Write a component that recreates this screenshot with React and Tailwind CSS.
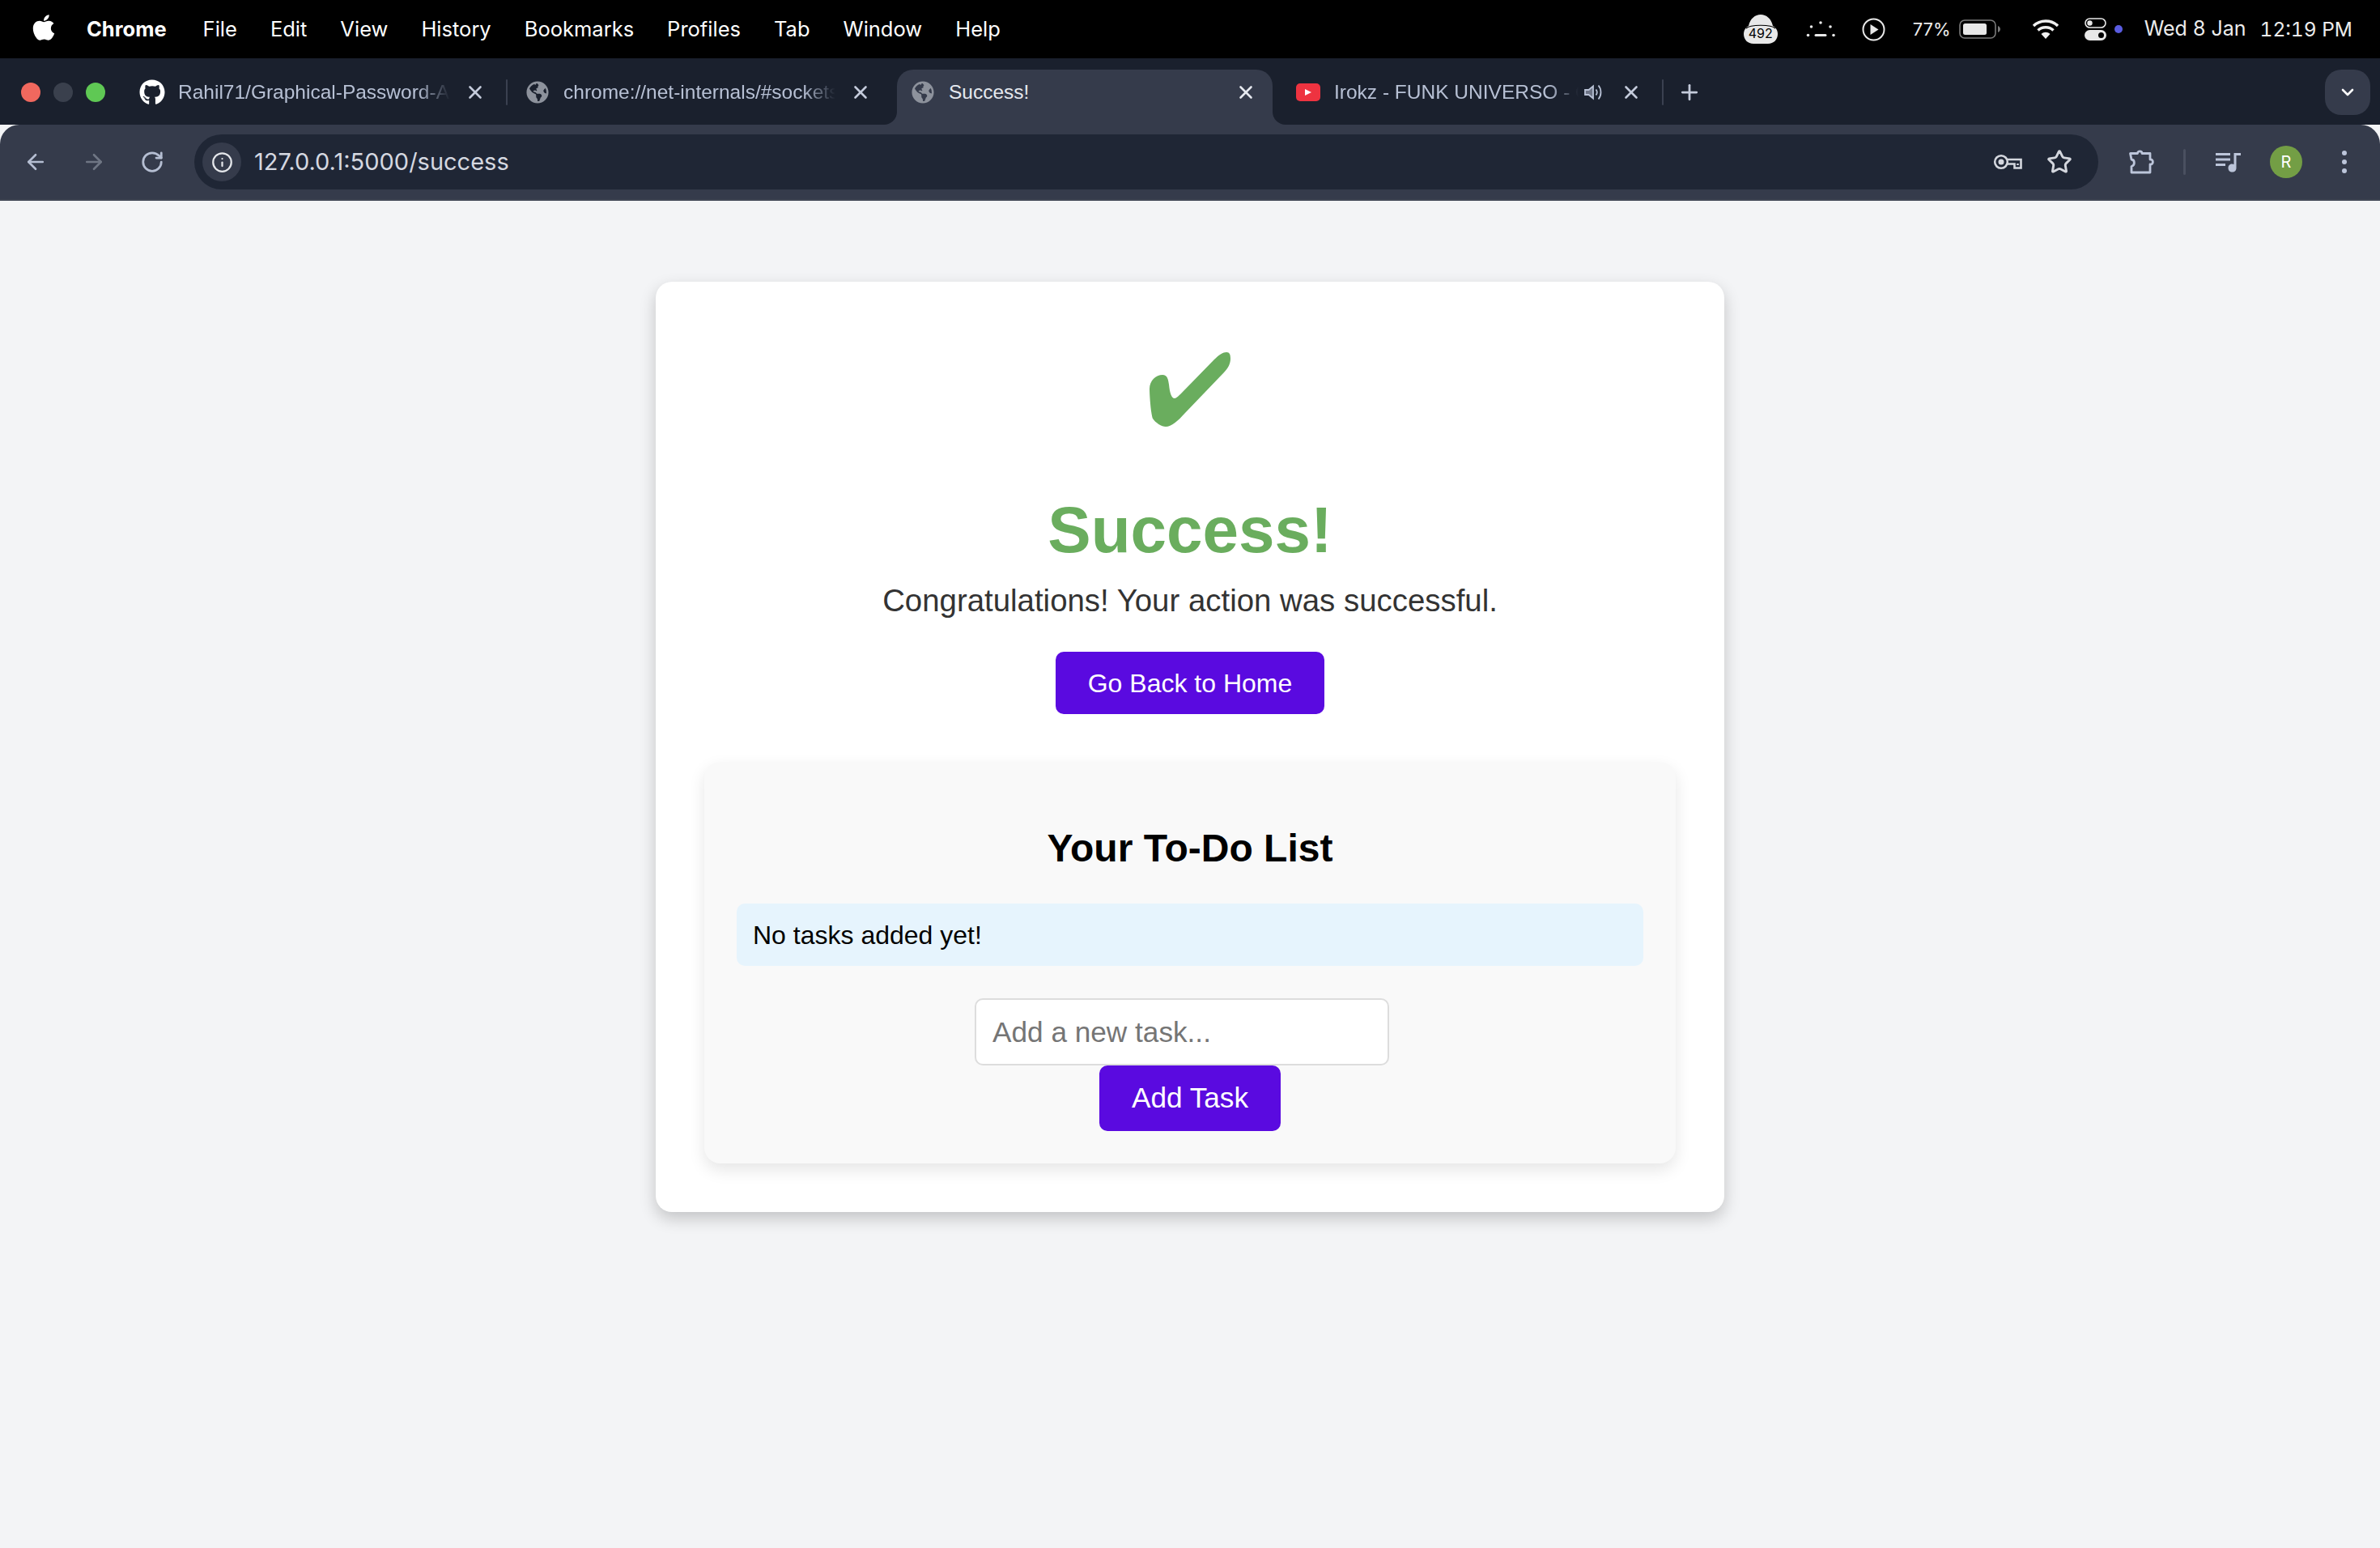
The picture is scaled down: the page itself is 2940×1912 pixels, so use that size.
import React from "react";
import { FaApple, FaGithub, FaGlobeAmericas } from "react-icons/fa";
import { ArrowLeft, ArrowRight, ChevronDown, Info, Plus, RotateCw, Star, X } from "lucide-react";

const menuItems = ["File", "Edit", "View", "History", "Bookmarks", "Profiles", "Tab", "Window", "Help"];

const CheckMark = () => (
  <svg viewBox="0 0 100 92" className="w-[100px] h-[92px]">
    <path
      fill="#6aad5e"
      d="M95 0C99 0 100 3 100 8C100 14 97 20 92 25L44 75C35 85 27 92 20 92C15 92 7 87 4 82C2 78 0 55 0 45C0 35 8 28 16 28C22 28 23 33 24 40C25 50 27 57 31 57C33 57 36 54 40 50L80 9C86 3 91 0 95 0Z"
    />
  </svg>
);

const CloudBadge = () => (
  <span className="relative block w-[42px] h-[36px]">
    <svg viewBox="0 0 42 36" className="w-[42px] h-[36px]">
      <path
        fill="#e8e8e8"
        d="M6 14C8 5 14 0 21 0C28 0 34 5 36 14C40 16 42 20 42 24C42 31 37 36 30 36H12C5 36 0 31 0 24C0 20 2 16 6 14Z"
      />
      <path fill="none" stroke="#000" strokeWidth="1.2" d="M3 17C8 12 34 12 39 17" />
    </svg>
    <span className="absolute inset-x-0 top-[12px] text-center text-[16px] leading-[22px] text-black font-['Inter',sans-serif]">
      492
    </span>
  </span>
);

const StatusDots = () => (
  <svg viewBox="0 0 37 22" className="w-[37px] h-[22px]" fill="#e8e8e8">
    <circle cx="18" cy="3" r="1.8" />
    <circle cx="6.5" cy="8" r="1.8" />
    <circle cx="30" cy="8" r="1.8" />
    <circle cx="2.5" cy="18.5" r="1.8" />
    <circle cx="34" cy="18.5" r="1.8" />
    <rect x="10.5" y="17" width="15" height="3" rx="1.5" />
  </svg>
);

const PlayCircle = () => (
  <svg viewBox="0 0 29 29" className="w-[29px] h-[29px]">
    <circle cx="14.5" cy="14.5" r="13" fill="none" stroke="#e8e8e8" strokeWidth="2" />
    <path d="M10.5 8L20.5 14.5L10.5 21Z" fill="#e8e8e8" />
  </svg>
);

const Battery = () => (
  <svg viewBox="0 0 52 24" className="w-[52px] h-[24px]">
    <rect x="1" y="1" width="44" height="22" rx="6" fill="none" stroke="#7b7b7b" strokeWidth="1.6" />
    <rect x="5" y="5" width="29" height="14" rx="2.5" fill="#e8e8e8" />
    <path d="M48 8C50 9 51 10.5 51 12C51 13.5 50 15 48 16Z" fill="#7b7b7b" />
  </svg>
);

const Wifi = () => (
  <svg viewBox="0 0 34 26" className="w-[34px] h-[26px]" fill="none" stroke="#f0f0f0" strokeLinecap="butt">
    <path strokeWidth="3.4" d="M2 9C10 1 24 1 32 9" />
    <path strokeWidth="3.4" d="M7.5 14.5C12.5 9.5 21.5 9.5 26.5 14.5" />
    <path d="M11.5 19L17 25L22.5 19C19 16 15 16 11.5 19Z" fill="#f0f0f0" stroke="none" />
  </svg>
);

const Toggles = () => (
  <svg viewBox="0 0 28 28" className="w-[28px] h-[28px]">
    <rect x="1" y="1" width="25" height="11" rx="5.5" fill="none" stroke="#e8e8e8" strokeWidth="1.6" />
    <circle cx="6.5" cy="6.5" r="3.2" fill="#e8e8e8" />
    <rect y="15" width="27" height="13" rx="6.5" fill="#e8e8e8" />
    <circle cx="20.5" cy="21.5" r="3.5" fill="#000" />
  </svg>
);

const YouTube = () => (
  <span className="flex items-center justify-center w-[30px] h-[22px] rounded-[5px] bg-[#ee3340]">
    <svg viewBox="0 0 10 10" className="w-[10px] h-[10px]">
      <path d="M1 1L9 5L1 9Z" fill="#fff" />
    </svg>
  </span>
);

const Speaker = () => (
  <svg viewBox="0 0 24 24" className="w-[24px] h-[24px]" fill="none" stroke="#b9c2d6" strokeWidth="1.8">
    <path d="M2 9H6.5L12 4.5V19.5L6.5 15H2Z" fill="#6e7587" />
    <path d="M15.5 8.5C17 10.5 17 13.5 15.5 15.5" />
    <path d="M18.5 3.5C22.5 8 22.5 16 18.5 20.5" />
  </svg>
);

const KeyIcon = () => (
  <svg viewBox="0 0 36 20" className="w-[36px] h-[20px]" fill="none" stroke="#d4d7de" strokeWidth="2.6">
    <circle cx="10" cy="10" r="7.8" />
    <circle cx="10" cy="10" r="3.5" fill="#d4d7de" stroke="none" />
    <path d="M17.5 7H34.5V17.5H26.5V12.5H17.5" />
    <path d="M30.5 12V14" />
  </svg>
);

const Extensions = () => (
  <svg viewBox="0 0 32 32" className="w-[32px] h-[32px]" fill="none" stroke="#bcc5da" strokeWidth="2.8" strokeLinejoin="round">
    <path d="M2.5 5.5H11.5C11.5 2 17 2 17 5.5H27V13C31.5 12.5 31.5 19.5 27 19V29H4V21.5C8.5 20.5 8.5 13.5 4 13Z" />
  </svg>
);

const MediaQueue = () => (
  <svg viewBox="0 0 32 26" className="w-[32px] h-[26px]" fill="#bcc5da">
    <rect x="0" y="2" width="18" height="3" />
    <rect x="0" y="8.5" width="18" height="3" />
    <rect x="0" y="15" width="12" height="3" />
    <path d="M22.5 2H31V5H25.5V20.5C25.5 23.5 23.5 25.5 20.5 25.5C17.5 25.5 15.5 23.5 15.5 20.5C15.5 17.5 17.5 15.5 20.5 15.5C21 15.5 22 15.7 22.5 16Z" />
  </svg>
);

const Tab = ({ icon, title, active, audio, fade }) => (
  <div
    className={`relative flex items-center w-[464px] h-[68px] pb-3 pl-4 pr-5 rounded-t-[20px] ${active ? "bg-[#353b4b]" : ""}`}
  >
    {active && (
      <>
        <span className="absolute -left-4 bottom-0 w-4 h-4 bg-[#353b4b]">
          <span className="block w-4 h-4 rounded-br-[16px] bg-[#1a202d]" />
        </span>
        <span className="absolute -right-4 bottom-0 w-4 h-4 bg-[#353b4b]">
          <span className="block w-4 h-4 rounded-bl-[16px] bg-[#1a202d]" />
        </span>
      </>
    )}
    <span className="flex items-center justify-center w-8 h-8 shrink-0">{icon}</span>
    <span
      className={`ml-4 mr-[18px] flex-1 overflow-hidden whitespace-nowrap text-[24.5px] leading-8 ${active ? "text-[#e6e9ef]" : "text-[#b7c0d4]"} ${fade ? "[mask-image:linear-gradient(to_right,black_88%,transparent)]" : ""}`}
    >
      {title}
    </span>
    {audio && (
      <span className="mr-[22px] -ml-[12px]">
        <Speaker />
      </span>
    )}
    <X className={`w-[26px] h-[26px] shrink-0 ${active ? "text-[#e6e9ef]" : "text-[#c4cbdb]"}`} strokeWidth={2.4} />
  </div>
);

const Divider = () => <span className="w-[2px] h-8 mx-[5px] mb-3 rounded bg-[#3a4050]" />;

const App = () => {
  return (
    <div className="min-h-screen flex flex-col bg-[#f3f4f6] font-['Liberation_Sans',Arial,sans-serif]">
      {/* mac menu bar */}
      <div className="flex items-center h-[72px] pl-[38px] pr-[34px] bg-black text-white font-['Inter',sans-serif] text-[25.5px]">
        <FaApple className="w-[32px] h-[36px] -mt-1" />
        <span className="ml-[37px] font-bold">Chrome</span>
        <div className="flex gap-[41px] ml-[45px]">
          {menuItems.map((item) => (
            <span key={item}>{item}</span>
          ))}
        </div>
        <div className="flex items-center ml-auto text-[#ececec] text-[25px]">
          <CloudBadge />
          <span className="ml-[35px]">
            <StatusDots />
          </span>
          <span className="ml-[32px]">
            <PlayCircle />
          </span>
          <span className="ml-[34px] text-[22px]">77%</span>
          <span className="ml-[10px]">
            <Battery />
          </span>
          <span className="ml-[38px]">
            <Wifi />
          </span>
          <span className="ml-[31px]">
            <Toggles />
          </span>
          <span className="ml-[9px] w-[10px] h-[10px] rounded-full bg-[#5a5ce0]" />
          <span className="ml-[27px]">Wed 8 Jan</span>
          <span className="ml-[17px] tabular-nums text-[24.5px]">12:19 PM</span>
        </div>
      </div>

      {/* tab strip */}
      <div className="flex items-end h-[82px] pl-[26px] pr-3 bg-[#1a202d]">
        <div className="flex items-center gap-4 h-[68px] pb-3">
          <span className="w-6 h-6 rounded-full bg-[#f1685e]" />
          <span className="w-6 h-6 rounded-full bg-[#3a404d]" />
          <span className="w-6 h-6 rounded-full bg-[#5fc854]" />
        </div>
        <div className="flex items-center ml-[26px]">
          <Tab
            icon={<FaGithub className="w-8 h-8 text-white" />}
            title="Rahil71/Graphical-Password-Authentication"
            fade
          />
          <Divider />
          <Tab
            icon={<FaGlobeAmericas className="w-7 h-7 text-[#8d929c]" />}
            title="chrome://net-internals/#sockets"
            fade
          />
          <span className="w-3" />
          <Tab icon={<FaGlobeAmericas className="w-7 h-7 text-[#8d929c]" />} title="Success!" active />
          <span className="w-3" />
          <Tab icon={<YouTube />} title="Irokz - FUNK UNIVERSO - Official" audio fade />
          <Divider />
          <Plus className="w-[30px] h-[30px] ml-3 mb-3 text-[#c4cbdb]" strokeWidth={2.2} />
        </div>
        <div className="flex items-center justify-center ml-auto mb-3 w-14 h-14 rounded-[20px] bg-[#353b4b]">
          <ChevronDown className="w-6 h-6 text-white" strokeWidth={2.6} />
        </div>
      </div>

      {/* toolbar */}
      <div className="flex items-center h-[94px] pl-2 rounded-t-[24px] border-b-2 border-[#3f4553] bg-[#353b4b]">
        <div className="flex items-center justify-center w-[72px]">
          <ArrowLeft className="w-[30px] h-[30px] text-[#b5bed2]" strokeWidth={2.1} />
        </div>
        <div className="flex items-center justify-center w-[72px]">
          <ArrowRight className="w-[30px] h-[30px] text-[#6f7684]" strokeWidth={2.1} />
        </div>
        <div className="flex items-center justify-center w-[72px]">
          <RotateCw className="w-[30px] h-[30px] text-[#b5bed2]" strokeWidth={2.2} />
        </div>
        <div className="flex items-center flex-1 h-[68px] ml-4 pl-[10px] pr-[32px] rounded-full bg-[#1f2635]">
          <span className="flex items-center justify-center w-12 h-12 rounded-full bg-[#353b4b]">
            <Info className="w-[27px] h-[27px] text-[#e4e6ea]" strokeWidth={2} />
          </span>
          <span className="ml-4 text-[29px] text-[#d5d8e0] font-['Inter',sans-serif]">127.0.0.1:5000/success</span>
          <span className="ml-auto">
            <KeyIcon />
          </span>
          <Star className="w-[32px] h-[32px] ml-[30px] text-[#d4d7de]" strokeWidth={2.2} />
        </div>
        <div className="flex items-center w-[348px] pl-[37px]">
          <Extensions />
          <span className="w-[3px] h-8 ml-[36px] rounded bg-[#4a5060]" />
          <span className="ml-[37px]">
            <MediaQueue />
          </span>
          <span className="flex items-center justify-center w-10 h-10 ml-[35px] rounded-full bg-[#739e45] text-white text-[20px] font-['Inter',sans-serif]">
            R
          </span>
          <div className="flex flex-col gap-[5px] ml-[49px]">
            <span className="w-[6px] h-[6px] rounded-full bg-[#bcc5da]" />
            <span className="w-[6px] h-[6px] rounded-full bg-[#bcc5da]" />
            <span className="w-[6px] h-[6px] rounded-full bg-[#bcc5da]" />
          </div>
        </div>
      </div>

      {/* page */}
      <div className="flex justify-center pt-[100px]">
        <div className="w-[1320px] p-[60px] rounded-[20px] bg-white shadow-[0_8px_20px_rgba(0,0,0,0.2)] text-center">
          <div className="flex justify-center pt-[27px] pb-[82px]">
            <CheckMark />
          </div>
          <h1 className="text-[80px] leading-[92px] font-bold text-[#6aad5e]">Success!</h1>
          <p className="mt-[18px] text-[38.4px] leading-[46px] text-[#333]">Congratulations! Your action was successful.</p>
          <button className="mt-10 h-[77px] w-[332px] rounded-[10px] bg-[#5a0ae0] text-white text-[32px]">
            Go Back to Home
          </button>
          <div className="mt-[59px] h-[496px] p-10 rounded-[20px] bg-[#f9f9f9] shadow-[0_8px_20px_rgba(0,0,0,0.1)]">
            <h2 className="mt-[38px] text-[48px] leading-[58px] font-bold text-black">Your To-Do List</h2>
            <div className="flex items-center mt-[39px] h-[77px] px-5 rounded-[10px] bg-[#e6f4fd] text-[32px] text-black">
              No tasks added yet!
            </div>
            <div className="flex flex-col items-center mt-10">
              <input
                className="w-[512px] h-[83px] mr-5 px-5 rounded-[10px] border-2 border-[#ddd] bg-white text-[35.2px] placeholder:text-[#757575] outline-none"
                placeholder="Add a new task..."
              />
              <button className="w-[224px] h-[81px] rounded-[10px] bg-[#5a0ae0] text-white text-[35.2px]">Add Task</button>
            </div>
          </div>
        </div>
      </div>
    </div>
  );
};

export default App;
